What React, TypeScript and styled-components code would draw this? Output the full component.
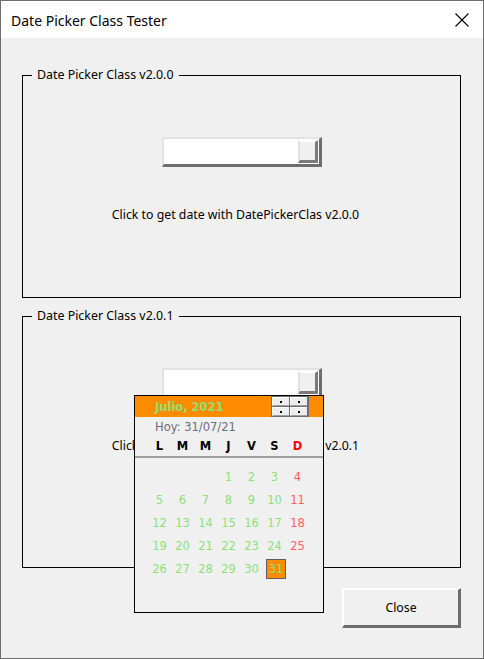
import React from "react";
import styled, { createGlobalStyle } from "styled-components";

const Global = createGlobalStyle`
  html, body { margin: 0; padding: 0; background: #ffffff; }
  * { box-sizing: border-box; }
`;

const Window = styled.div`
  width: 484px;
  height: 659px;
  border: 1px solid #6f6f6f;
  display: flex;
  flex-direction: column;
  font-family: "Noto Sans", "Open Sans", sans-serif;
`;

const TitleBar = styled.div`
  height: 37px;
  background: #ffffff;
  display: flex;
  align-items: center;
  justify-content: space-between;
  padding: 0 14px 0 10px;
`;

const Title = styled.span`
  font-family: "Noto Sans", sans-serif;
  font-size: 14px;
  color: #000;
  padding-top: 1px;
`;

const Body = styled.div`
  flex: 1;
  background: #f0f0f0;
  padding: 37px 22px 0 21px;
  display: flex;
  flex-direction: column;
`;

const Frame = styled.div<{ $h: number; $pt: number }>`
  position: relative;
  height: ${(p) => p.$h}px;
  border: 1px solid #000;
  padding-top: ${(p) => p.$pt}px;
  display: flex;
  flex-direction: column;
  align-items: center;
  & + & { margin-top: 18px; }
`;

const Legend = styled.span`
  position: absolute;
  top: -9px;
  left: 9px;
  padding: 0 5px;
  background: #f0f0f0;
  font-family: "Noto Sans", sans-serif;
  font-size: 12.4px;
  line-height: 16px;
  color: #000;
`;

const TextBoxWrap = styled.div`
  position: relative;
  margin-left: 1px;
`;

const TextBox = styled.div`
  width: 160px;
  height: 30px;
  background: #fff;
  border-style: solid;
  border-width: 2px 3px 3px 2px;
  border-color: #e3e3e3 #6d6d6d #6d6d6d #e3e3e3;
  display: flex;
  justify-content: flex-end;
  padding: 1px 1px 1px 0;
`;

const DropButton = styled.div`
  width: 20px;
  height: 23px;
  background: #f0f0f0;
  border-style: solid;
  border-width: 2px 3px 3px 2px;
  border-color: #ffffff #7a7a7a #7a7a7a #e0e0e0;
`;

const Caption = styled.div`
  margin-top: 40px;
  font-family: "Noto Sans", sans-serif;
  font-size: 12.3px;
  line-height: 16px;
  color: #000;
  margin-left: -12px;
`;

const Popup = styled.div`
  position: absolute;
  left: -28px;
  top: 27px;
  width: 190px;
  height: 218px;
  border: 1px solid #000;
  background: #f0f0f0;
  z-index: 2;
  font-family: "DejaVu Sans", sans-serif;
  display: flex;
  flex-direction: column;
`;

const Header = styled.div`
  height: 21px;
  background: #ff8c00;
  display: flex;
  align-items: center;
  padding: 0 14px 0 20px;
`;

const Month = styled.span`
  flex: 1;
  font-weight: bold;
  font-size: 11.5px;
  color: #90e070;
`;

const Spinner = styled.div`
  display: grid;
  grid-template-columns: 17px 17px;
  grid-template-rows: 9px 9px;
  gap: 1px;
  padding: 1px 2px 1px 1px;
  background: #6e6e6e;
  height: 21px;
`;

const SpinBtn = styled.div`
  background: #ededed;
  border-top: 1px solid #ffffff;
  border-left: 1px solid #ffffff;
  border-bottom: 1px solid #a0a0a0;
  display: flex;
  align-items: center;
  justify-content: center;
  &::after {
    content: "";
    width: 2px;
    height: 2px;
    background: #000;
  }
`;

const Today = styled.div`
  height: 19px;
  display: flex;
  align-items: center;
  padding-left: 20px;
  font-size: 11.5px;
  color: #6c6c7c;
`;

const Grid = styled.div`
  display: grid;
  grid-template-columns: repeat(7, 23px);
  padding-left: 13px;
`;

const WeekRow = styled(Grid)`
  height: 20px;
  align-items: center;
`;

const WeekDay = styled.span<{ $sun?: boolean }>`
  text-align: center;
  font-weight: bold;
  font-size: 11.5px;
  color: ${(p) => (p.$sun ? "#ff0000" : "#000")};
`;

const Separator = styled.div`
  height: 2px;
  background: #a0a0a0;
`;

const DayGrid = styled(Grid)`
  padding-top: 7px;
  grid-auto-rows: 23px;
  align-items: center;
  justify-items: center;
`;

const Day = styled.span<{ $sun?: boolean; $sel?: boolean }>`
  width: 20px;
  height: 20px;
  display: flex;
  align-items: center;
  justify-content: center;
  font-size: 11.5px;
  color: ${(p) => (p.$sun ? "#ff5c5c" : "#8ee07a")};
  background: ${(p) => (p.$sel ? "#ff8c00" : "transparent")};
  border: 1px solid ${(p) => (p.$sel ? "#5e5e5e" : "transparent")};
  margin-left: ${(p) => (p.$sel ? "3px" : "0")};
`;

const Footer = styled.div`
  display: flex;
  justify-content: flex-end;
  margin-top: 20px;
`;

const CloseButton = styled.button`
  width: 119px;
  height: 40px;
  background: #f0f0f0;
  border-style: solid;
  border-width: 2px 3px 3px 2px;
  border-color: #ffffff #6d6d6d #6d6d6d #ffffff;
  font-family: "Noto Sans", sans-serif;
  font-size: 12.3px;
  color: #000;
  padding: 0;
`;

const days: (number | null)[] = [
  null, null, null, 1, 2, 3, 4,
  5, 6, 7, 8, 9, 10, 11,
  12, 13, 14, 15, 16, 17, 18,
  19, 20, 21, 22, 23, 24, 25,
  26, 27, 28, 29, 30, 31,
];

const week = ["L", "M", "M", "J", "V", "S", "D"];

export default function App() {
  return (
    <>
      <Global />
      <Window>
        <TitleBar>
          <Title>Date Picker Class Tester</Title>
          <svg width="14" height="14" viewBox="0 0 14 14">
            <path d="M0.5 0.5 L13.5 13.5 M13.5 0.5 L0.5 13.5" stroke="#000" strokeWidth="1.1" />
          </svg>
        </TitleBar>
        <Body>
          <Frame $h={223} $pt={61}>
            <Legend>Date Picker Class v2.0.0</Legend>
            <TextBoxWrap>
              <TextBox>
                <DropButton />
              </TextBox>
            </TextBoxWrap>
            <Caption>Click to get date with DatePickerClas v2.0.0</Caption>
          </Frame>
          <Frame $h={252} $pt={51}>
            <Legend>Date Picker Class v2.0.1</Legend>
            <TextBoxWrap>
              <TextBox>
                <DropButton />
              </TextBox>
              <Popup>
                <Header>
                  <Month>Julio, 2021</Month>
                  <Spinner>
                    <SpinBtn />
                    <SpinBtn />
                    <SpinBtn />
                    <SpinBtn />
                  </Spinner>
                </Header>
                <Today>Hoy: 31/07/21</Today>
                <WeekRow>
                  {week.map((w, i) => (
                    <WeekDay key={i} $sun={i === 6}>{w}</WeekDay>
                  ))}
                </WeekRow>
                <Separator />
                <DayGrid>
                  {days.map((d, i) => (
                    <Day key={i} $sun={i % 7 === 6} $sel={d === 31}>
                      {d ?? ""}
                    </Day>
                  ))}
                </DayGrid>
              </Popup>
            </TextBoxWrap>
            <Caption>Click to get date with DatePickerClas v2.0.1</Caption>
          </Frame>
          <Footer>
            <CloseButton>Close</CloseButton>
          </Footer>
        </Body>
      </Window>
    </>
  );
}
